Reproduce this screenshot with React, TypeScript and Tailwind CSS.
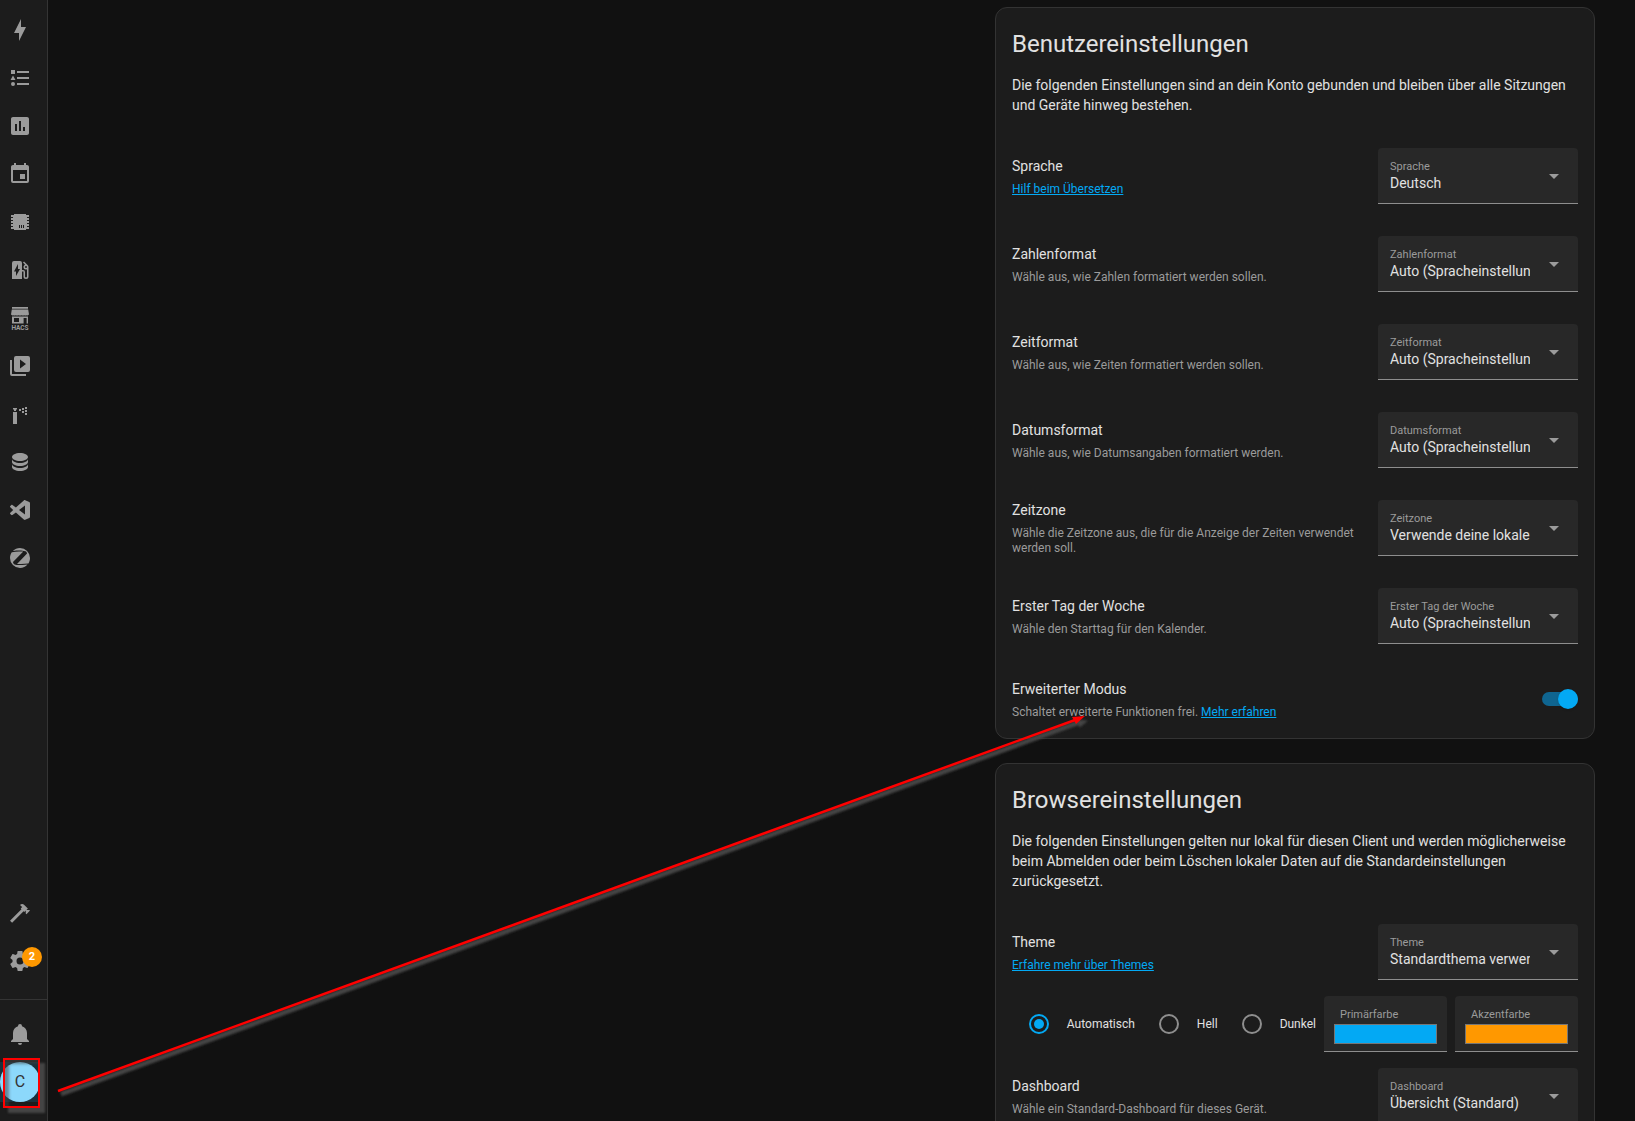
import React, { useState } from "react";

type IconProps = { path: string; className?: string };

const MdiIcon: React.FC<IconProps> = ({ path, className }) => (
  <svg viewBox="0 0 24 24" className={`size-6 ${className || ""}`} aria-hidden>
    <path d={path} fill="currentColor" fillRule="evenodd" />
  </svg>
);

const HacsIcon: React.FC = () => (
  <svg viewBox="0 0 24 24" className="size-6 overflow-visible" aria-hidden>
    <path
      d="M4 1H20V2.8H4ZM3.8 3.4H20.2L21 8.6Q20 9.8 18.8 9.2Q17.5 10 16.2 9.2Q15 10 13.6 9.2Q12 10 10.4 9.2Q9 10 7.8 9.2Q6.5 10 5.2 9.2Q4 9.8 3 8.6ZM4 10.6H20V17.5H4ZM6 12V16H11V12ZM15.6 12V17.5H18.6V12Z"
      fill="currentColor"
      fillRule="evenodd"
    />
    <text
      x="12"
      y="23.6"
      textAnchor="middle"
      fontSize="6.5"
      fontWeight="700"
      fill="currentColor"
    >
      HACS
    </text>
  </svg>
);

const ICONS = {
  bolt: "M11 15H6L13 1V9H18L11 23V15Z",
  list: "M5,9.5L7.5,14H2.5L5,9.5M3,4H7V8H3V4M5,20A2,2 0 0,0 7,18A2,2 0 0,0 5,16A2,2 0 0,0 3,18A2,2 0 0,0 5,20M9,5V7H21V5H9M9,19H21V17H9V19M9,13H21V11H9V13Z",
  chart:
    "M19 3H5C3.9 3 3 3.9 3 5V19C3 20.1 3.9 21 5 21H19C20.1 21 21 20.1 21 19V5C21 3.9 20.1 3 19 3M9 17H7V10H9V17M13 17H11V7H13V17M17 17H15V13H17V17Z",
  calendar:
    "M19,19H5V8H19M16,1V3H8V1H6V3H5C3.89,3 3,3.89 3,5V19A2,2 0 0,0 5,21H19A2,2 0 0,0 21,19V5C21,3.89 20.1,3 19,3H18V1M17,12H12V17H17V12Z",
  chip: "M6 4H18V5H21V7H19V8H21V10H19V11H21V13H19V14H21V16H19V17H21V19H18V20H6V19H3V17H5V16H3V14H5V13H3V11H5V10H3V8H5V7H3V5H6ZM11 15V18H12V15ZM13 15V18H14V15ZM15 15V18H16V15Z",
  charger:
    "M19.77,7.23L19.78,7.22L16.06,3.5L15,4.56L17.11,6.67C16.17,7.03 15.5,7.93 15.5,9A2.5,2.5 0 0,0 18,11.5C18.36,11.5 18.69,11.42 19,11.29V18.5A1,1 0 0,1 18,19.5A1,1 0 0,1 17,18.5V14A2,2 0 0,0 15,12H14V5A2,2 0 0,0 12,3H6A2,2 0 0,0 4,5V21H14V13.5H15.5V18.5A2.5,2.5 0 0,0 18,21A2.5,2.5 0 0,0 20.5,18.5V9C20.5,8.31 20.22,7.68 19.77,7.23M18,10A1,1 0 0,1 17,9A1,1 0 0,1 18,8A1,1 0 0,1 19,9A1,1 0 0,1 18,10M8,18V13.5H6L10,6V11H12L8,18Z",
  media:
    "M4,6H2V20A2,2 0 0,0 4,22H18V20H4V6M20,2H8A2,2 0 0,0 6,4V16A2,2 0 0,0 8,18H20A2,2 0 0,0 22,16V4A2,2 0 0,0 20,2M12,14.5V5.5L18,10L12,14.5Z",
  sprinkler:
    "M5 6H9V7L8 8V9H6V8L5 7ZM5 10H9V22H5ZM11 7H13V9H11ZM14 6H16V8H14ZM14 9H16V11H14ZM17 5H19V7H17ZM17 8H19V10H17ZM17 11H19V13H17Z",
  database:
    "M12,3C7.58,3 4,4.79 4,7C4,9.21 7.58,11 12,11C16.42,11 20,9.21 20,7C20,4.79 16.42,3 12,3M4,9V12C4,14.21 7.58,16 12,16C16.42,16 20,14.21 20,12V9C20,11.21 16.42,13 12,13C7.58,13 4,11.21 4,9M4,14V17C4,19.21 7.58,21 12,21C16.42,21 20,19.21 20,17V14C20,16.21 16.42,18 12,18C7.58,18 4,16.21 4,14Z",
  code: "M21.3 4.1L17.2 2.2C16.7 2 16.2 2.1 15.8 2.4L7.9 9.6L4.4 7C4.1 6.8 3.7 6.8 3.4 7L2.3 8C1.9 8.4 1.9 8.9 2.3 9.3L5.2 12L2.3 14.7C1.9 15.1 1.9 15.6 2.3 16L3.4 17C3.7 17.2 4.1 17.2 4.4 17L7.9 14.4L15.8 21.6C16.2 21.9 16.7 22 17.2 21.8L21.3 19.9C21.7 19.7 22 19.2 22 18.7V5.3C22 4.8 21.7 4.3 21.3 4.1M17 16.5L11 12L17 7.5Z",
  zigbee:
    "M4.06,6.15C3.97,6.17 3.88,6.22 3.8,6.28C2.66,7.9 2,9.87 2,12A10,10 0 0,0 12,22C15,22 17.68,20.68 19.5,18.6L17,18.85C14.25,19.15 11.45,19.19 8.66,18.96C7.95,18.94 7.24,18.76 6.59,18.45C5.73,18.06 5.15,17.23 5.07,16.29C5.06,16.13 5.12,16 5.23,15.87L7.42,13.6L15.03,5.7V5.6H10.84C8.57,5.64 6.31,5.82 4.06,6.15M20.17,17.5C20.26,17.47 20.35,17.44 20.43,17.39C21.42,15.83 22,14 22,12A10,10 0 0,0 12,2C9.22,2 6.7,3.13 4.89,4.97H5.17C8.28,4.57 11.43,4.47 14.56,4.65C15.5,4.64 16.45,4.82 17.33,5.17C18.25,5.53 18.89,6.38 19,7.37C19,7.53 18.93,7.7 18.82,7.82L9.71,17.19L9,17.95V18.06H13.14C15.5,18 17.84,17.81 20.17,17.5Z",
  hammer:
    "M2,19.63L13.43,8.2L12.72,7.5L14.14,6.07L12,3.89C13.2,2.7 15.09,2.7 16.27,3.89L19.87,7.5L18.45,8.91H21.29L22,9.62L18.45,13.21L17.74,12.5V9.62L16.27,11.04L15.56,10.33L4.13,21.76L2,19.63Z",
  cog: "M12,15.5A3.5,3.5 0 0,1 8.5,12A3.5,3.5 0 0,1 12,8.5A3.5,3.5 0 0,1 15.5,12A3.5,3.5 0 0,1 12,15.5M19.43,12.97C19.47,12.65 19.5,12.33 19.5,12C19.5,11.67 19.47,11.34 19.43,11L21.54,9.37C21.73,9.22 21.78,8.95 21.66,8.73L19.66,5.27C19.54,5.05 19.27,4.96 19.05,5.05L16.56,6.05C16.04,5.66 15.5,5.32 14.87,5.07L14.5,2.42C14.46,2.18 14.25,2 14,2H10C9.75,2 9.54,2.18 9.5,2.42L9.13,5.07C8.5,5.32 7.96,5.66 7.44,6.05L4.95,5.05C4.73,4.96 4.46,5.05 4.34,5.27L2.34,8.73C2.21,8.95 2.27,9.22 2.46,9.37L4.57,11C4.53,11.34 4.5,11.67 4.5,12C4.5,12.33 4.53,12.65 4.57,12.97L2.46,14.63C2.27,14.78 2.21,15.05 2.34,15.27L4.34,18.73C4.46,18.95 4.73,19.03 4.95,18.95L7.44,17.94C7.96,18.34 8.5,18.68 9.13,18.93L9.5,21.58C9.54,21.82 9.75,22 10,22H14C14.25,22 14.46,21.82 14.5,21.58L14.87,18.93C15.5,18.67 16.04,18.34 16.56,17.94L19.05,18.95C19.27,19.03 19.54,18.95 19.66,18.73L21.66,15.27C21.78,15.05 21.73,14.78 21.54,14.63L19.43,12.97Z",
  bell: "M21,19V20H3V19L5,17V11C5,7.9 7.03,5.17 10,4.29C10,4.19 10,4.1 10,4A2,2 0 0,1 12,2A2,2 0 0,1 14,4C14,4.1 14,4.19 14,4.29C16.97,5.17 19,7.9 19,11V17L21,19M14,21A2,2 0 0,1 12,23A2,2 0 0,1 10,21",
};

const NAV_ITEMS: { label: string; icon: React.ReactNode }[] = [
  { label: "Energie", icon: <MdiIcon path={ICONS.bolt} /> },
  { label: "Logbuch", icon: <MdiIcon path={ICONS.list} /> },
  { label: "Verlauf", icon: <MdiIcon path={ICONS.chart} /> },
  { label: "Kalender", icon: <MdiIcon path={ICONS.calendar} /> },
  { label: "ESPHome", icon: <MdiIcon path={ICONS.chip} /> },
  { label: "evcc", icon: <MdiIcon path={ICONS.charger} /> },
  { label: "HACS", icon: <HacsIcon /> },
  { label: "Medien", icon: <MdiIcon path={ICONS.media} /> },
  { label: "Bewässerung", icon: <MdiIcon path={ICONS.sprinkler} /> },
  { label: "Datenbank", icon: <MdiIcon path={ICONS.database} /> },
  { label: "Studio Code Server", icon: <MdiIcon path={ICONS.code} /> },
  { label: "Zigbee2MQTT", icon: <MdiIcon path={ICONS.zigbee} /> },
];

const NavButton: React.FC<{ label: string; children: React.ReactNode }> = ({
  label,
  children,
}) => (
  <button
    type="button"
    aria-label={label}
    className="relative grid h-12 w-10 shrink-0 place-items-center text-[#9b9b9b]"
  >
    {children}
  </button>
);

const Sidebar: React.FC = () => (
  <aside className="flex w-12 shrink-0 flex-col border-r border-[#343434] bg-[#1c1c1c] pt-1.5">
    <nav className="flex grow flex-col">
      {NAV_ITEMS.map((item) => (
        <NavButton key={item.label} label={item.label}>
          {item.icon}
        </NavButton>
      ))}
    </nav>
    <NavButton label="Entwicklerwerkzeuge">
      <MdiIcon path={ICONS.hammer} />
    </NavButton>
    <NavButton label="Einstellungen">
      <MdiIcon path={ICONS.cog} />
      <span className="absolute top-2.5 left-[22px] grid size-5 place-items-center rounded-full bg-[#ff9800] text-[11px] font-bold text-white">
        2
      </span>
    </NavButton>
    <div className="mt-3.5 flex flex-col border-t border-[#343434] pt-2.5 pb-[19px]">
      <NavButton label="Benachrichtigungen">
        <MdiIcon path={ICONS.bell} />
      </NavButton>
      <button
        type="button"
        aria-label="Profil"
        className="mt-1 h-10 w-10 bg-[#1a313c]"
      >
        <span className="relative grid size-10 place-items-center rounded-full bg-[#8cd8fb] text-base text-[#333]">
          C
          <span className="absolute -top-1 left-[3px] h-[50px] w-[37px] border-2 border-[#ff0000] shadow-[5px_5px_2px_#444,inset_4px_4px_3px_#4448]" />
        </span>
      </button>
    </div>
  </aside>
);

const Card: React.FC<{
  title: string;
  intro: string;
  children: React.ReactNode;
}> = ({ title, intro, children }) => (
  <section className="rounded-xl border border-[#333] bg-[#1c1c1c] px-4 pt-3">
    <h1 className="text-2xl leading-12">{title}</h1>
    <p className="mt-[7px] mb-[17px] text-sm">{intro}</p>
    {children}
  </section>
);

const Row: React.FC<{
  title: string;
  description: React.ReactNode;
  className?: string;
  children: React.ReactNode;
}> = ({ title, description, className, children }) => (
  <div className={`flex items-center gap-4 ${className || "h-22"}`}>
    <div className="grow">
      <h2 className="text-sm">{title}</h2>
      <div className="mt-1.5 text-xs leading-[15px] text-[#9b9b9b]">
        {description}
      </div>
    </div>
    {children}
  </div>
);

const TextLink: React.FC<{ children: React.ReactNode }> = ({ children }) => (
  <a href="#" className="text-[#03a9f4] underline">
    {children}
  </a>
);

const SelectField: React.FC<{ label: string; value: string }> = ({
  label,
  value,
}) => {
  const id = `select-${label.toLowerCase().replace(/\s/g, "-")}`;
  return (
    <div className="relative w-[200px] shrink-0">
      <label
        htmlFor={id}
        className="absolute top-[13px] left-3 text-[11px] leading-3 text-[#9b9b9b]"
      >
        {label}
      </label>
      <select
        id={id}
        className="block h-14 w-full appearance-none rounded-t border-b border-[#8e8e8e] bg-[#282828] pt-3.5 pr-12 pl-3 text-sm"
      >
        <option>{value}</option>
      </select>
      <svg
        viewBox="0 0 10 5"
        className="pointer-events-none absolute top-[26px] right-[19px] h-[5px] w-2.5"
        aria-hidden
      >
        <path d="M0 0H10L5 5Z" fill="#9b9b9b" />
      </svg>
    </div>
  );
};

const ColorField: React.FC<{ label: string; value: string }> = ({
  label,
  value,
}) => (
  <label className="flex h-14 w-[123px] shrink-0 flex-col rounded-t border-b border-[#8e8e8e] bg-[#282828] px-2.5 pt-[13px]">
    <span className="px-1.5 text-[11px] leading-3 text-[#9b9b9b]">{label}</span>
    <input
      type="color"
      defaultValue={value}
      className="mt-[3px] h-5 w-full appearance-none border border-[#767676] [&::-webkit-color-swatch]:border-0 [&::-webkit-color-swatch-wrapper]:p-0"
    />
  </label>
);

const ThemeRadio: React.FC<{
  label: string;
  checked: boolean;
  onChange: () => void;
}> = ({ label, checked, onChange }) => (
  <label className="flex items-center gap-[18px] text-xs">
    <input
      type="radio"
      name="theme-mode"
      checked={checked}
      onChange={onChange}
      className="size-5 appearance-none rounded-full border-2 border-[#8e8e8e] checked:border-[#03a9f4] checked:bg-[#03a9f4] checked:bg-clip-content checked:p-[3px]"
    />
    {label}
  </label>
);

const Arrow: React.FC = () => (
  <svg
    className="pointer-events-none absolute top-0 left-0 h-[1121px] w-[1100px]"
    aria-hidden
  >
    <defs>
      <filter id="arrow-blur" x="-5%" y="-5%" width="110%" height="110%">
        <feGaussianBlur stdDeviation="0.8" />
      </filter>
    </defs>
    <g filter="url(#arrow-blur)" fill="#444" stroke="#444">
      <path d="M61 1094L1080 722" strokeWidth="5" />
      <path d="M1076 720L1087 721L1080 727Z" />
    </g>
    <path d="M58 1091L1075 720" stroke="#ff0000" strokeWidth="2.5" />
    <path d="M1072 717L1085 716L1076 724Z" fill="#ff0000" />
  </svg>
);

const THEME_MODES = ["Automatisch", "Hell", "Dunkel"];

const App: React.FC = () => {
  const [mode, setMode] = useState("Automatisch");
  const [advanced, setAdvanced] = useState(true);

  return (
    <div className="relative flex h-screen overflow-hidden bg-[#111] font-[Roboto,sans-serif] text-[#e1e1e1]">
      <Sidebar />
      <main className="flex grow justify-end overflow-hidden pt-[7px] pr-10">
        <div className="flex w-[600px] flex-col gap-6 self-start">
          <Card
            title="Benutzereinstellungen"
            intro="Die folgenden Einstellungen sind an dein Konto gebunden und bleiben über alle Sitzungen und Geräte hinweg bestehen."
          >
            <Row
              title="Sprache"
              description={<TextLink>Hilf beim Übersetzen</TextLink>}
            >
              <SelectField label="Sprache" value="Deutsch" />
            </Row>
            <Row
              title="Zahlenformat"
              description="Wähle aus, wie Zahlen formatiert werden sollen."
            >
              <SelectField
                label="Zahlenformat"
                value="Auto (Spracheinstellung verwenden)"
              />
            </Row>
            <Row
              title="Zeitformat"
              description="Wähle aus, wie Zeiten formatiert werden sollen."
            >
              <SelectField
                label="Zeitformat"
                value="Auto (Spracheinstellung verwenden)"
              />
            </Row>
            <Row
              title="Datumsformat"
              description="Wähle aus, wie Datumsangaben formatiert werden."
            >
              <SelectField
                label="Datumsformat"
                value="Auto (Spracheinstellung verwenden)"
              />
            </Row>
            <Row
              title="Zeitzone"
              description="Wähle die Zeitzone aus, die für die Anzeige der Zeiten verwendet werden soll."
            >
              <SelectField
                label="Zeitzone"
                value="Verwende deine lokale Zeitzone"
              />
            </Row>
            <Row
              title="Erster Tag der Woche"
              description="Wähle den Starttag für den Kalender."
            >
              <SelectField
                label="Erster Tag der Woche"
                value="Auto (Spracheinstellung verwenden)"
              />
            </Row>
            <Row
              className="h-[78px]"
              title="Erweiterter Modus"
              description={
                <>
                  Schaltet erweiterte Funktionen frei.{" "}
                  <TextLink>Mehr erfahren</TextLink>
                </>
              }
            >
              <input
                type="checkbox"
                role="switch"
                aria-label="Erweiterter Modus"
                checked={advanced}
                onChange={() => setAdvanced(!advanced)}
                className="flex h-3.5 w-9 shrink-0 appearance-none items-center rounded-full bg-[#555] before:size-5 before:shrink-0 before:rounded-full before:bg-[#9b9b9b] before:shadow checked:justify-end checked:bg-[#0f6590] checked:before:bg-[#03a9f4]"
              />
            </Row>
          </Card>
          <Card
            title="Browsereinstellungen"
            intro="Die folgenden Einstellungen gelten nur lokal für diesen Client und werden möglicherweise beim Abmelden oder beim Löschen lokaler Daten auf die Standardeinstellungen zurückgesetzt."
          >
            <Row
              title="Theme"
              description={<TextLink>Erfahre mehr über Themes</TextLink>}
            >
              <SelectField
                label="Theme"
                value="Standardthema verwenden"
              />
            </Row>
            <div className="flex items-center justify-end gap-2">
              <div className="flex gap-6">
                {THEME_MODES.map((item) => (
                  <ThemeRadio
                    key={item}
                    label={item}
                    checked={mode === item}
                    onChange={() => setMode(item)}
                  />
                ))}
              </div>
              <ColorField label="Primärfarbe" value="#03a9f4" />
              <ColorField label="Akzentfarbe" value="#ff9800" />
            </div>
            <Row
              title="Dashboard"
              description="Wähle ein Standard-Dashboard für dieses Gerät."
            >
              <SelectField label="Dashboard" value="Übersicht (Standard)" />
            </Row>
          </Card>
        </div>
      </main>
      <Arrow />
    </div>
  );
};

export default App;
